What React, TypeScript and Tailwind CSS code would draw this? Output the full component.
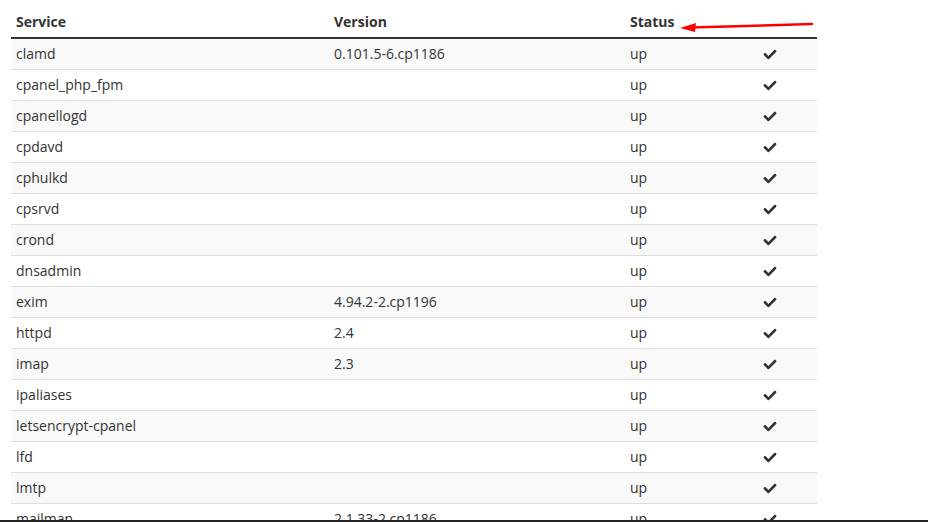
import React from "react";
import { FaCheck } from "react-icons/fa";

const rows: [string, string][] = [
  ["clamd", "0.101.5-6.cp1186"],
  ["cpanel_php_fpm", ""],
  ["cpanellogd", ""],
  ["cpdavd", ""],
  ["cphulkd", ""],
  ["cpsrvd", ""],
  ["crond", ""],
  ["dnsadmin", ""],
  ["exim", "4.94.2-2.cp1196"],
  ["httpd", "2.4"],
  ["imap", "2.3"],
  ["ipaliases", ""],
  ["letsencrypt-cpanel", ""],
  ["lfd", ""],
  ["lmtp", ""],
  ["mailman", "2.1.33-2.cp1186"],
];

const cols = "grid grid-cols-[318px_296px_98px_94px]";

export default function App() {
  return (
    <div
      className="relative h-[522px] w-[928px] overflow-hidden bg-white text-[14px] leading-[20px] text-[#333]"
      style={{ fontFamily: '"Open Sans", "Liberation Sans", sans-serif' }}
    >
      <div className="ml-[11px] w-[806px]">
        <div className={`${cols} h-[39px] items-end border-b-2 border-[#333] pb-[5px] font-bold`}>
          <div className="px-[5px]">Service</div>
          <div className="px-[5px]">Version</div>
          <div className="px-[5px]">Status</div>
          <div className="px-[5px]"></div>
        </div>
        {rows.map(([name, ver], i) => (
          <div
            key={name}
            className={`${cols} h-[31px] items-center border-b border-[#ddd] ${i % 2 === 0 ? "bg-[#f9f9f9]" : "bg-white"}`}
          >
            <div className="px-[5px]">{name}</div>
            <div className="px-[5px]">{ver}</div>
            <div className="px-[5px]">up</div>
            <div className="flex justify-center px-[5px]">
              <FaCheck className="h-[13px] w-[14px] text-[#333]" />
            </div>
          </div>
        ))}
      </div>
      <svg
        className="absolute left-[676px] top-[18px]"
        width="140"
        height="16"
        viewBox="0 0 140 16"
      >
        <line x1="136" y1="6" x2="14" y2="9.5" stroke="#f00" strokeWidth="2.5" strokeLinecap="round" />
        <polygon points="4,10 20,5 19,14" fill="#f00" />
      </svg>
      <div className="absolute bottom-0 left-0 h-[2px] w-full bg-[#222]" />
    </div>
  );
}
